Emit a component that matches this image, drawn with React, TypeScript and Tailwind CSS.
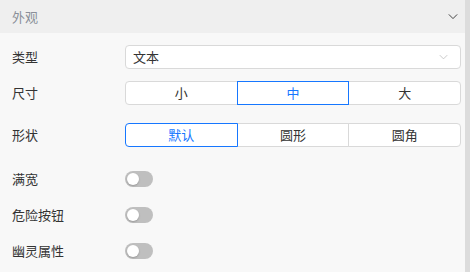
import React from 'react';

const font = { fontFamily: '"Noto Sans CJK SC", "Noto Sans", sans-serif' };

function Chevron({ className }: { className?: string }) {
  return (
    <svg viewBox="0 0 12 8" className={className} fill="none" stroke="currentColor" strokeWidth="1.1">
      <path d="M1 1.5 L6 6.5 L11 1.5" />
    </svg>
  );
}

function Segmented({ items, active }: { items: string[]; active: number }) {
  return (
    <div className="flex h-6 w-[336px]">
      {items.map((it, i) => (
        <div
          key={it}
          className={[
            'flex flex-1 items-center justify-center bg-white text-[13px] border',
            i === 0 ? 'rounded-l-[4px]' : '-ml-px',
            i === items.length - 1 ? 'rounded-r-[4px]' : '',
            i === active ? 'relative z-10 border-[#1677ff] text-[#1677ff]' : 'border-[#d9d9d9] text-[#333]',
          ].join(' ')}
        >
          {it}
        </div>
      ))}
    </div>
  );
}

function Toggle() {
  return (
    <div className="flex h-4 w-7 items-center rounded-full bg-[#bfbfbf] px-[2px]">
      <div className="h-3 w-3 rounded-full bg-white shadow-[0_1px_2px_rgba(0,0,0,0.2)]" />
    </div>
  );
}

function Row({ label, children, className }: { label: string; children: React.ReactNode; className?: string }) {
  return (
    <div className={'flex items-center ' + (className ?? '')}>
      <div className="w-[125px] pl-3 text-[13px] leading-4 text-[#333]">{label}</div>
      {children}
    </div>
  );
}

export default function App() {
  return (
    <div className="flex h-[272px] w-[470px] bg-[#f8f8f8]" style={font}>
      <div className="flex flex-1 flex-col">
        <div className="flex h-[33px] items-center justify-between bg-[#efefef] pl-3 pr-[7px]">
          <span className="text-[13px] text-[#8a8f99]">外观</span>
          <Chevron className="h-[7px] w-[10px] text-[#333]" />
        </div>
        <div className="flex flex-col pt-3">
          <Row label="类型" className="h-6">
            <div className="flex h-6 w-[336px] items-center justify-between rounded-[4px] border border-[#d9d9d9] bg-white pl-[7px] pr-3">
              <span className="text-[13px] text-[#333]">文本</span>
              <Chevron className="h-[6px] w-[9px] text-[#bfbfbf]" />
            </div>
          </Row>
          <Row label="尺寸" className="mt-3 h-6">
            <Segmented items={['小', '中', '大']} active={1} />
          </Row>
          <Row label="形状" className="mt-[18px] h-6">
            <Segmented items={['默认', '圆形', '圆角']} active={0} />
          </Row>
          <Row label="满宽" className="mt-6 h-4">
            <Toggle />
          </Row>
          <Row label="危险按钮" className="mt-5 h-4">
            <Toggle />
          </Row>
          <Row label="幽灵属性" className="mt-5 h-4">
            <Toggle />
          </Row>
        </div>
      </div>
      <div className="w-[5px] bg-[#dcdcdc]" />
    </div>
  );
}
